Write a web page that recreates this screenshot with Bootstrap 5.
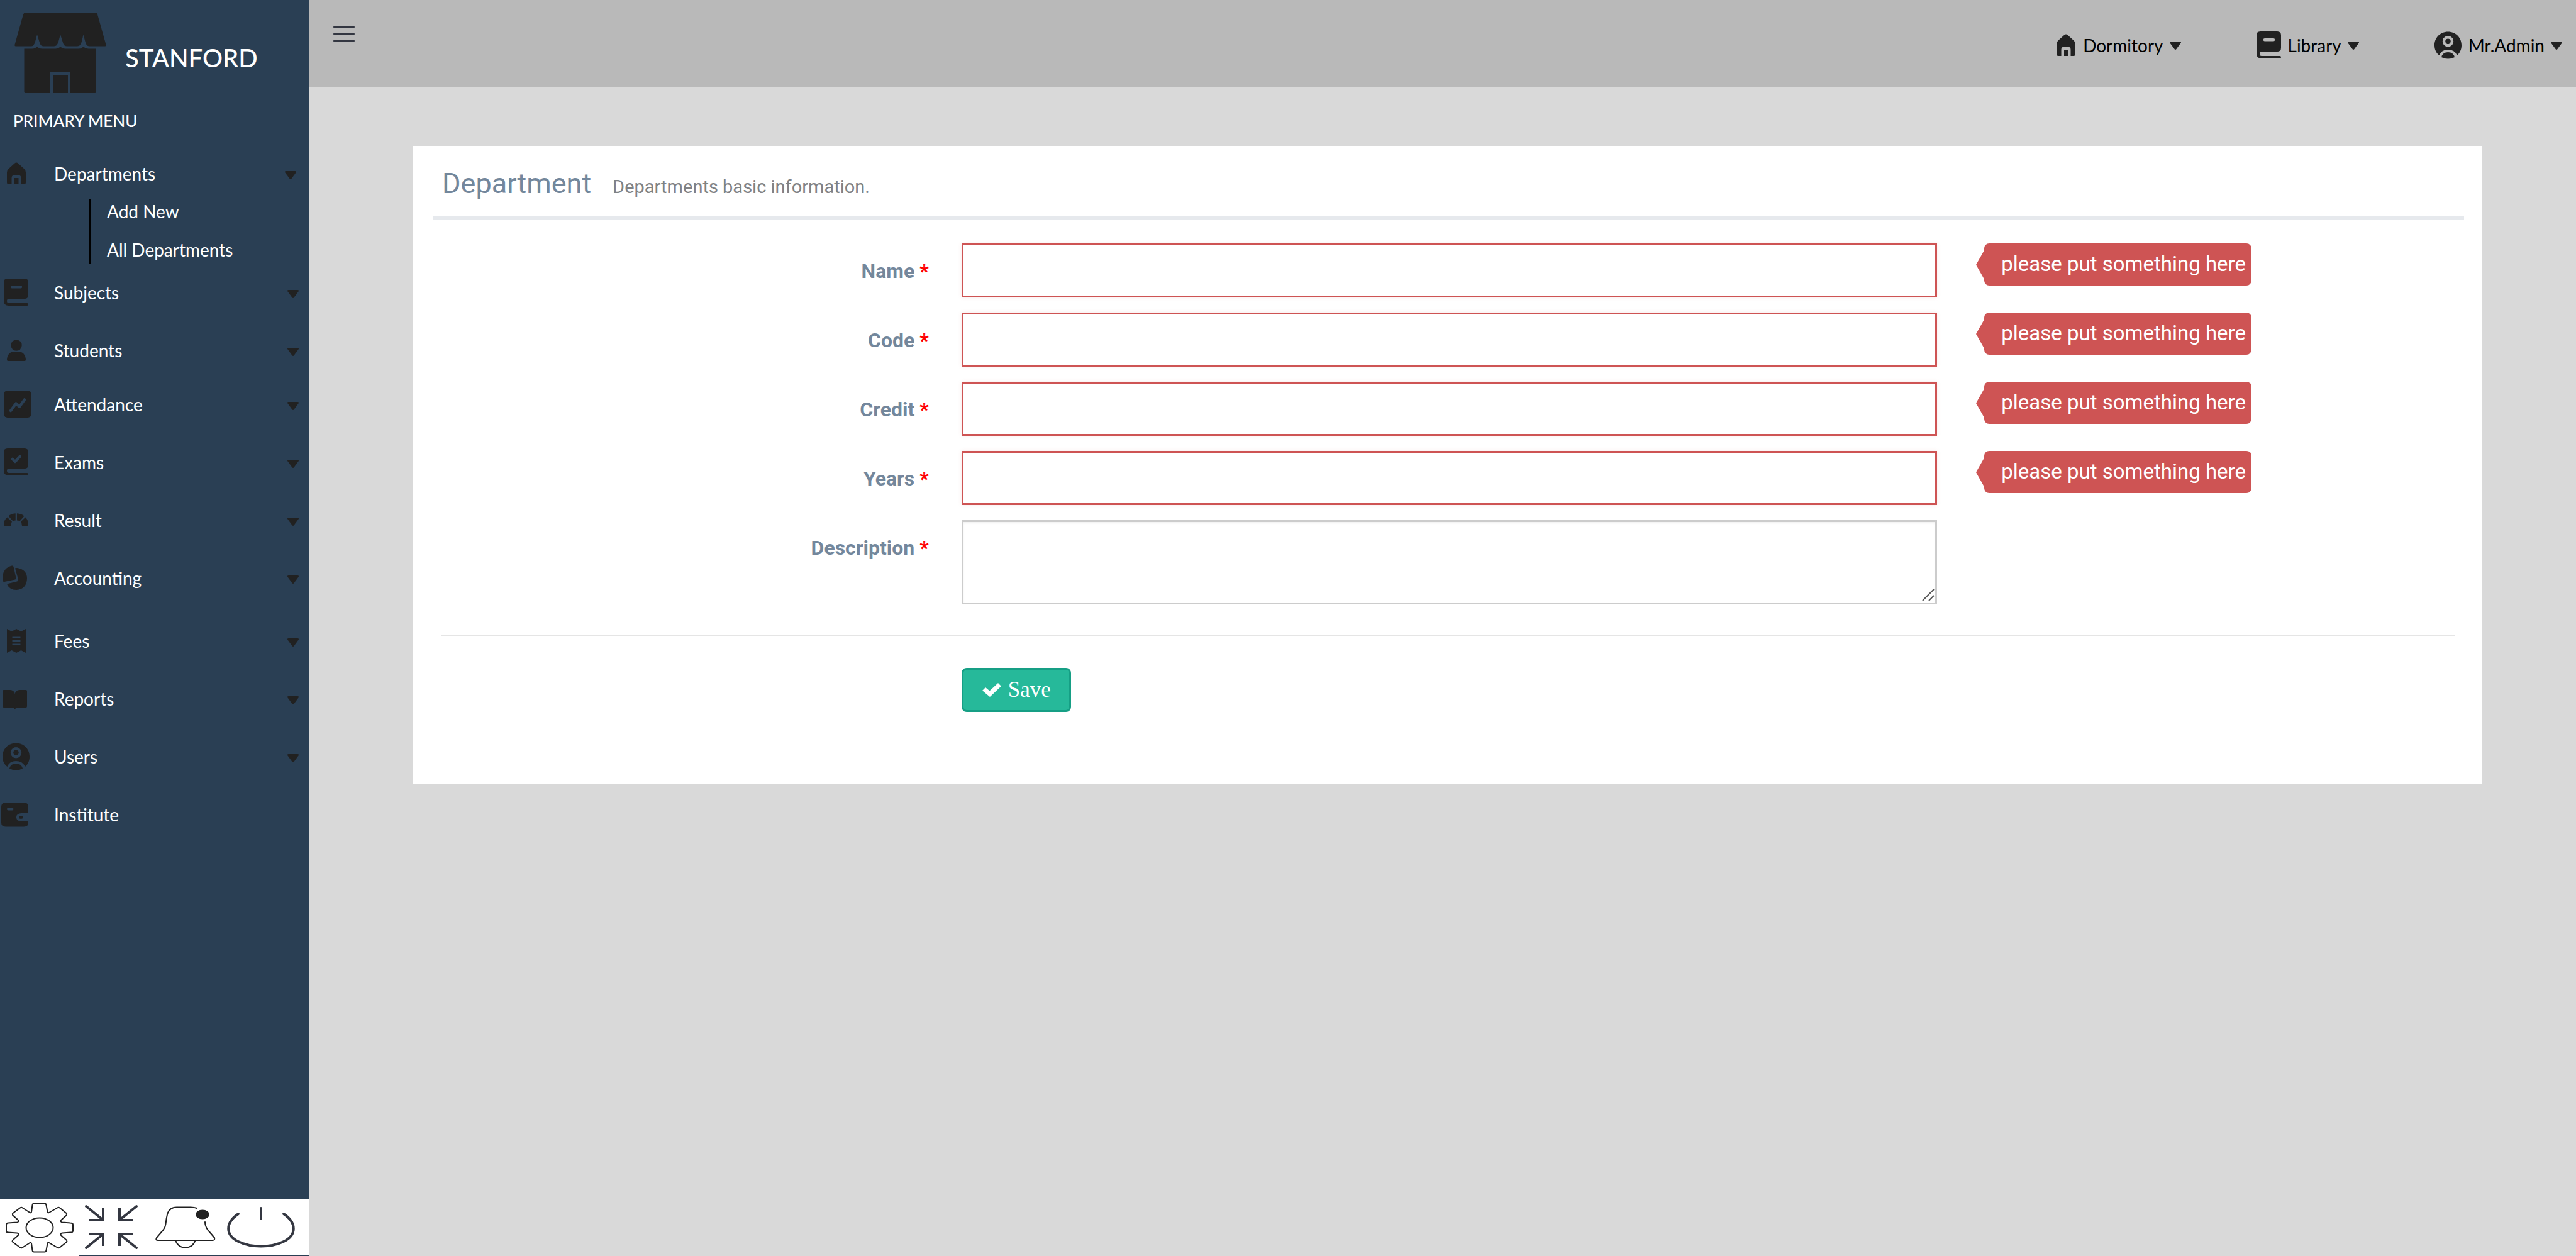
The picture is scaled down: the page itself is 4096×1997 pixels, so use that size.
<!DOCTYPE html>
<html lang="en">
<head>
<meta charset="utf-8">
<meta name="viewport" content="width=device-width, initial-scale=1">
<title>Stanford - Department</title>
<link href="https://cdn.jsdelivr.net/npm/bootstrap@5.3.0/dist/css/bootstrap.min.css" rel="stylesheet">
<style>
:root { --navy:#2a3f54; --ink:#212121; --slate:#73879c; --alert:#ce5454; }
body { background:#d9d9d9; font-family:Lato,"Noto Sans",sans-serif; font-size:28px; line-height:32px; color:#000; }
svg { display:block; flex:none; fill:var(--ink); }
.sidebar { flex:0 0 491px; background:var(--navy); color:#fff; }
.sidebar a, .topbar a { color:inherit; text-decoration:none; }
.brand { padding:20px 0 0 23px; height:168px; gap:30px; font-size:40px; line-height:48px; font-weight:500; }
.brand-name { padding-top:48px; }
.menu-title { padding-left:21px; margin:8px 0 46px; font-size:26px; line-height:32px; font-weight:500; }
.menu-link { height:44px; padding-right:16px; margin-bottom:48px; }
.menu-link svg:first-child { margin-right:34px; }
.menu-link .arrow { margin:4px 0 0 auto; }
.menu-link.first { margin-bottom:18px; padding-right:20px; }
.menu-link.tight { margin-bottom:42px; }
.menu-link.loose { margin-bottom:56px; }
.submenu { margin:0 0 24px 142px; padding:4px 0 6px 26px; border-left:2px solid #000; }
.submenu a { display:block; }
.submenu li + li { margin-top:29px; }
.tools { background:var(--navy); }
.tool { border:0; padding:0; background:#fff; display:flex; justify-content:center; align-items:center; }
.tool-main { height:90px; flex:0 0 125px; }
.tool-set { height:88px; background:#fff; gap:20px; padding-left:4px; }
.tool svg { fill:none; stroke-linecap:round; stroke-linejoin:round; }
.topbar { height:138px; background:#b9b9b9; padding:0 22px 0 33px; }
.burger { border:0; background:none; padding:0; margin-top:38px; align-self:flex-start; }
.topnav { gap:120px; padding-top:6px; }
.topnav a { gap:10px; }
.panel { background:#fff; margin:94px 149px 0 165px; padding:42px 65px 115px 71px; font-family:Roboto,sans-serif; color:var(--slate); }
.panel-head { margin:0 -36px 38px -38px; padding:0 0 29px 14px; gap:34px; border-bottom:5px solid #e6e9ed; font-size:29px; line-height:36px; color:#808285; }
.panel-head h1 { font-size:45px; line-height:36px; font-weight:400; margin:0; color:var(--slate); }
.row { --bs-gutter-x:52px; }
.field { margin-bottom:24px; }
.field label { font-size:32px; line-height:40px; font-weight:700; padding-top:24px; display:block; text-align:right; }
.field label span { color:#f00; }
.field .form-control { height:86px; border:3px solid var(--alert); border-radius:0; font-size:32px; padding:12px 24px; background:#fff; box-shadow:0 0 6px #ce545420; }
.field textarea.form-control { height:134px; border-color:#ccc; box-shadow:inset 0 2px 3px #0000000d; resize:none; }
.grip { position:absolute; right:30px; bottom:5px; pointer-events:none; }
.tip { position:relative; display:inline-block; margin-left:23px; padding:13px 9px 14px 27px; border-radius:8px; background:var(--alert); color:#fff; font-size:33px; line-height:40px; white-space:nowrap; }
.tip::before { content:""; position:absolute; left:-13px; top:11px; border:solid transparent; border-width:23px 13px 23px 0; border-right-color:var(--alert); }
.rule { border:0; border-top:3px solid #e5e5e5; opacity:1; margin:0 -22px 50px -25px; }
.btn-save { --bs-btn-bg:#26b99a; --bs-btn-border-color:#169f85; --bs-btn-color:#fff; --bs-btn-hover-bg:#169f85; --bs-btn-hover-color:#fff; height:70px; border-width:3px; border-radius:8px; padding:0 29px; gap:10px; font-family:"Liberation Serif",serif; font-size:35px; line-height:40px; }
</style>
</head>
<body>
<svg width="0" height="0" class="position-absolute" aria-hidden="true">
<defs>
<symbol id="home" viewBox="0 0 52 52"><path fill-rule="evenodd" d="M23.500 9.500Q26 7.500 28.500 9.500L38.500 18.500Q41 21 41 24V40Q41 43 38 43H33.500V33Q33.500 28.500 29.500 28.500H22.500Q18.500 28.500 18.500 33V43H14Q11 43 11 40V24Q11 21 13.500 18.500ZM23 43V33H29.500V43Z"/></symbol>
<symbol id="book" viewBox="0 0 52 52"><path fill-rule="evenodd" d="M12 4H39Q45 4 45 10V30Q45 36 39 36H14Q11 36 11 39.500Q11 43 14 43H43Q45 43 45 45Q45 47 43 47H14Q6 47 6 39V10Q6 4 12 4ZM19 15A2.200 2.200 0 0 0 19 19.400H33A2.200 2.200 0 0 0 33 15Z"/></symbol>
<symbol id="exam" viewBox="0 0 52 52"><path d="M12 4H39Q45 4 45 10V30Q45 36 39 36H14Q11 36 11 39.500Q11 43 14 43H43Q45 43 45 45Q45 47 43 47H14Q6 47 6 39V10Q6 4 12 4Z"/><path d="M18 21L22 25L29.500 17" transform="translate(2 0)" fill="none" stroke="#2a3f54" stroke-width="4.500" stroke-linecap="round" stroke-linejoin="round"/></symbol>
<symbol id="person" viewBox="0 0 52 52"><ellipse cx="26" cy="18" rx="8.700" ry="8.700"/><path d="M11 41Q12 28.500 22 28.500H30Q40 28.500 41 41Q41 43 39 43H13Q11 43 11 41Z"/></symbol>
<symbol id="trend" viewBox="0 0 52 52"><rect x="6" y="4" width="44" height="43" rx="6"/><path d="M17 36L25.500 24.500L31 29.500L39 18.500" fill="none" stroke="#2a3f54" stroke-width="4.500" stroke-linecap="round" stroke-linejoin="round"/></symbol>
<symbol id="gauge" viewBox="0 0 52 52"><path d="M6 33.500Q6 26 11.500 21.500L19 28.500Q17 31 17 35H8Q6 35 6 33.500ZM13.500 19.500Q18 15.800 24.700 15.300V26.500Q22 26.700 20.500 27.500ZM27 15.300Q34 15.800 38.500 19.500L31.500 27.500Q29.500 26.700 27 26.500ZM40.500 21.500Q45 26 45 33.500Q45 35 43 35H35Q35 31 33 28.500Z"/></symbol>
<symbol id="pie" viewBox="0 0 52 52"><path d="M19 6.500Q21 6 21.500 8L25.500 26Q26 28 24 28.500L7 32Q4.500 32.500 4.200 30Q3 20 8 13Q12 8 19 6.500Z"/><path d="M24 10.500Q24.500 10 27 10Q43 12.500 43 27Q42 44 26 45Q15 45 11 35.500L27 31.500Q29.500 30.500 29 28Z"/></symbol>
<symbol id="receipt" viewBox="0 0 52 52"><path fill-rule="evenodd" d="M11 7L18.500 11L26 7L33.500 11L41 7V45L33.500 41L26 45L18.500 41L11 45ZM19.500 19.500V21.500H32.500V19.500ZM19.500 25V27H32.500V25ZM19.500 30.500V32.500H32.500V30.500Z"/></symbol>
<symbol id="open-book" viewBox="0 0 52 52"><path d="M6 12H16Q22.500 12 23.700 18.500Q25 12 31 12H41Q43 12 43 14V38Q43 40 41 40H27Q25 40 23.700 43Q22 40 20 40H6Q4 40 4 38V14Q4 12 6 12Z"/></symbol>
<symbol id="account" viewBox="0 0 52 52"><path fill-rule="evenodd" d="M25.500 4.500C38 4.500 47 14 47 26C47 33 44 38.500 40 42Q36 33 25.500 33Q15 33 11.500 42C7 38.500 4 33 4 26C4 14 13 4.500 25.500 4.500ZM25.500 11A8.700 8.700 0 1 0 25.510 11ZM25.500 15.400A4.300 4.300 0 1 1 25.490 15.400Z"/><path d="M15 45Q17 37 25.500 37Q34 37 36 45Q25.500 50 15 45Z"/></symbol>
<symbol id="wallet" viewBox="0 0 52 52"><path fill-rule="evenodd" d="M9 7H38Q45 7 45 14V24H34Q26 24 26 30.500Q26 37 34 37H45V39Q45 45.500 38 45.500H9Q2 45.500 2 39V14Q2 7 9 7ZM13 15.500A2 2 0 0 0 13 19.500H19.500A2 2 0 0 0 19.500 15.500Z"/><rect x="30" y="28" width="6.500" height="4.800" rx="2"/></symbol>
<symbol id="caret" viewBox="0 0 18 13"><path d="M2 0H16Q19 0 17.500 2.500L10.500 12Q9 14 7.500 12L.500 2.500Q-1 0 2 0Z"/></symbol>
</defs>
</svg>
<div class="d-flex min-vh-100">
  <aside class="sidebar d-flex flex-column">
    <a href="#" class="brand d-flex">
      <svg width="146" height="128" viewBox="0 0 146 128" aria-hidden="true"><path d="M17 0H129Q131 0 132 3L145.500 51Q146 53.500 144 53.500H119Q114 53.500 112.500 46L109.500 35L107 46Q105 53.500 100 53.500H83Q78 53.500 76.500 46L73 35L70 46Q68 53.500 63 53.500H46Q41 53.500 39.500 46L36 35L33 46Q31 53.500 27 53.500H2Q0 53.500 .500 51L14 3Q15 0 17 0Z"/><path d="M15.500 57.500H28Q33 57.500 36 54Q39 57.500 44 57.500H65Q70 57.500 73 54Q76 57.500 81 57.500H102Q107 57.500 109.500 54Q113 57.500 118 57.500H130V126Q130 128 128 128H89V94H57V128H17.500Q15.500 128 15.500 126Z"/><path d="M61 99H85V128H61Z"/></svg>
      <span class="brand-name">STANFORD</span>
    </a>
    <div class="menu-title">PRIMARY MENU</div>
    <nav class="flex-grow-1">
      <a href="#" class="menu-link first d-flex align-items-center"><svg width="52" height="52"><use href="#home"/></svg>Departments<svg class="arrow" width="18" height="13"><use href="#caret"/></svg></a>
      <ul class="submenu list-unstyled">
        <li><a href="#">Add New</a></li>
        <li><a href="#">All Departments</a></li>
      </ul>
      <a href="#" class="menu-link d-flex align-items-center"><svg width="52" height="52"><use href="#book"/></svg>Subjects<svg class="arrow" width="18" height="13"><use href="#caret"/></svg></a>
      <a href="#" class="menu-link tight d-flex align-items-center"><svg width="52" height="52"><use href="#person"/></svg>Students<svg class="arrow" width="18" height="13"><use href="#caret"/></svg></a>
      <a href="#" class="menu-link d-flex align-items-center"><svg width="52" height="52"><use href="#trend"/></svg>Attendance<svg class="arrow" width="18" height="13"><use href="#caret"/></svg></a>
      <a href="#" class="menu-link d-flex align-items-center"><svg width="52" height="52"><use href="#exam"/></svg>Exams<svg class="arrow" width="18" height="13"><use href="#caret"/></svg></a>
      <a href="#" class="menu-link d-flex align-items-center"><svg width="52" height="52"><use href="#gauge"/></svg>Result<svg class="arrow" width="18" height="13"><use href="#caret"/></svg></a>
      <a href="#" class="menu-link loose d-flex align-items-center"><svg width="52" height="52"><use href="#pie"/></svg>Accounting<svg class="arrow" width="18" height="13"><use href="#caret"/></svg></a>
      <a href="#" class="menu-link d-flex align-items-center"><svg width="52" height="52"><use href="#receipt"/></svg>Fees<svg class="arrow" width="18" height="13"><use href="#caret"/></svg></a>
      <a href="#" class="menu-link d-flex align-items-center"><svg width="52" height="52"><use href="#open-book"/></svg>Reports<svg class="arrow" width="18" height="13"><use href="#caret"/></svg></a>
      <a href="#" class="menu-link d-flex align-items-center"><svg width="52" height="52"><use href="#account"/></svg>Users<svg class="arrow" width="18" height="13"><use href="#caret"/></svg></a>
      <a href="#" class="menu-link d-flex align-items-center"><svg width="52" height="52"><use href="#wallet"/></svg>Institute</a>
    </nav>
    <div class="tools d-flex align-items-start">
      <button type="button" class="tool tool-main" aria-label="Settings"><svg width="108" height="80" viewBox="0 0 108 80" stroke="#212121" stroke-width="2"><path d="M45 1.500H62Q64 1.500 64.500 4L66.500 15Q67 17 69 16L83 8Q84.500 7.500 86 8.500L96.500 17Q98 18.500 97 20L88 28Q86.500 31 90 31.500L103 32.500Q107 32.500 107 35V45Q107 47.500 103 47.500L90 48.500Q86.500 49 88 52L97 60Q98 61.500 96.500 63L86 71.500Q84.500 72.500 83 72L69 64Q67 63 66.500 65L64.500 76Q64 78.500 62 78.500H45Q43 78.500 42.500 76L41 65Q40 63 38.500 64L26 72Q24.500 72.500 23 71.500L11.500 63Q10 61.500 11 60L20 52Q21.500 49 18 48.500L4 47.500Q1 47.500 1 45V35Q1 32.500 4 32.500L18 31.500Q21.500 31 20 28L11 20Q10 18.500 11.500 17L23 8.500Q24.500 7.500 26 8L38.500 16Q40 17 41 15L42.500 4Q43 1.500 45 1.500Z"/><ellipse cx="54" cy="40" rx="21.500" ry="15.500"/></svg></button>
      <div class="tool-set d-flex align-items-center flex-grow-1">
        <button type="button" class="tool" aria-label="Compress"><svg width="96" height="72" viewBox="-5 0 96 72" stroke="#343741" stroke-width="4"><path d="M3 3L29 24M83 3L57 24M3 69L29 48M83 69L57 48"/><path stroke-linecap="butt" stroke-linejoin="miter" d="M30 6V25H8M56 6V25H78M30 66V47H8M56 66V47H78"/></svg></button>
        <button type="button" class="tool" aria-label="Notifications"><svg width="96" height="68" viewBox="-2 0 96 68" overflow="visible" stroke="#212121" stroke-width="2"><path d="M66 4Q62 2.500 56 2.500H34Q22 2.500 19 14Q17.500 20 16.500 29Q16 34 13 38L2 51Q0 55 4 55H91Q95 55 94 51L83 38Q79 32 79 26M32 55Q36 66.500 47.500 66.500Q60 66.500 63.500 55"/><ellipse cx="75" cy="14" rx="11" ry="7.500" fill="#212121" stroke="none"/></svg></button>
        <button type="button" class="tool" aria-label="Log out"><svg width="108" height="68" viewBox="0 0 108 68" stroke="#343741" stroke-width="4"><path d="M54 4V21M18 13C-3 27 -3 47 18 57C38 67 70 67 90 57C111 47 111 27 90 13"/></svg></button>
      </div>
    </div>
  </aside>
  <main class="flex-grow-1">
    <header class="topbar d-flex justify-content-between">
      <button type="button" class="burger" aria-label="Toggle menu"><svg width="44" height="32" viewBox="0 0 44 32"><path d="M8 5H38M8 16H38M8 27H38" stroke="#333641" stroke-width="4" stroke-linecap="round"/></svg></button>
      <nav class="topnav d-flex align-items-center">
        <a href="#" class="d-flex align-items-center"><svg width="34" height="52" viewBox="9 0 34 52"><use href="#home" width="52" height="52"/></svg>Dormitory<svg width="18" height="13"><use href="#caret"/></svg></a>
        <a href="#" class="d-flex align-items-center"><svg width="40" height="52" viewBox="6 0 40 52"><use href="#book" width="52" height="52"/></svg>Library<svg width="18" height="13"><use href="#caret"/></svg></a>
        <a href="#" class="d-flex align-items-center"><svg width="44" height="52" viewBox="4 0 44 52"><use href="#account" width="52" height="52"/></svg>Mr.Admin<svg width="18" height="13"><use href="#caret"/></svg></a>
      </nav>
    </header>
    <section class="panel">
      <div class="panel-head d-flex align-items-baseline"><h1>Department</h1><span>Departments basic information.</span></div>
      <form>
        <div class="row field">
          <div class="col-3"><label for="name">Name <span>*</span></label></div>
          <div class="col-6"><input id="name" type="text" class="form-control"></div>
          <div class="col-3"><div class="tip">please put something here</div></div>
        </div>
        <div class="row field">
          <div class="col-3"><label for="code">Code <span>*</span></label></div>
          <div class="col-6"><input id="code" type="text" class="form-control"></div>
          <div class="col-3"><div class="tip">please put something here</div></div>
        </div>
        <div class="row field">
          <div class="col-3"><label for="credit">Credit <span>*</span></label></div>
          <div class="col-6"><input id="credit" type="text" class="form-control"></div>
          <div class="col-3"><div class="tip">please put something here</div></div>
        </div>
        <div class="row field">
          <div class="col-3"><label for="years">Years <span>*</span></label></div>
          <div class="col-6"><input id="years" type="text" class="form-control"></div>
          <div class="col-3"><div class="tip">please put something here</div></div>
        </div>
        <div class="row mb-5">
          <div class="col-3 field mb-0"><label for="description">Description <span>*</span></label></div>
          <div class="col-6 field mb-0 position-relative"><textarea id="description" class="form-control"></textarea><svg class="grip" width="20" height="20" viewBox="0 0 20 20" aria-hidden="true"><path d="M1 19L19 1M11 19L19 11" stroke="#555" stroke-width="2"/></svg></div>
        </div>
        <hr class="rule">
        <div class="row">
          <div class="col-6 offset-3"><button type="submit" class="btn btn-save d-inline-flex align-items-center"><svg width="32" height="26" viewBox="0 0 32 26" aria-hidden="true"><path fill="#fff" d="M1 14L6 9L12.500 14.500L26 2L31 7L13 24Z"/></svg>Save</button></div>
        </div>
      </form>
    </section>
  </main>
</div>
<script src="https://cdn.jsdelivr.net/npm/bootstrap@5.3.0/dist/js/bootstrap.bundle.min.js"></script>
</body>
</html>
